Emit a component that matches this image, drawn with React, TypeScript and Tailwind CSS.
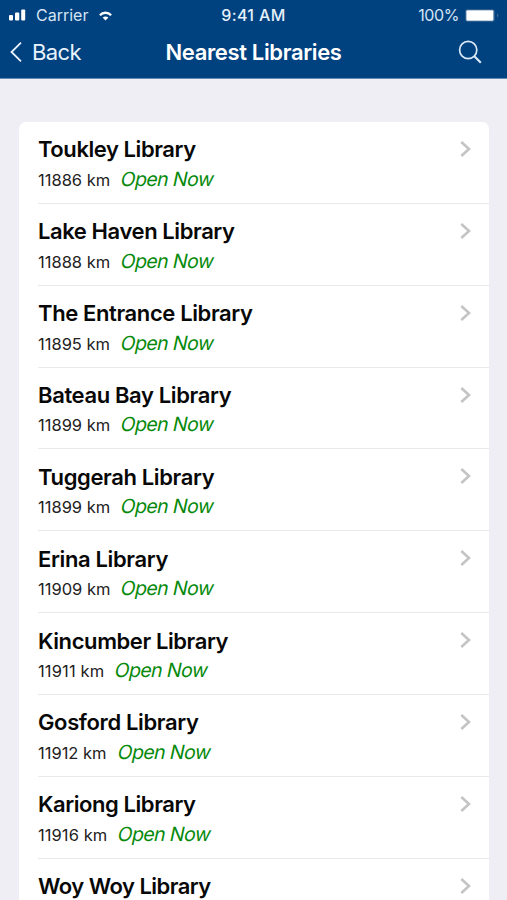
const libraries = [
  { name: "Toukley Library", km: "11886 km", tracking: "tracking-[-0.43px]", kmTracking: "tracking-normal" },
  { name: "Lake Haven Library", km: "11888 km", tracking: "tracking-[-0.41px]", kmTracking: "tracking-normal" },
  { name: "The Entrance Library", km: "11895 km", tracking: "tracking-[-0.38px]", kmTracking: "tracking-normal" },
  { name: "Bateau Bay Library", km: "11899 km", tracking: "tracking-[-0.37px]", kmTracking: "tracking-normal" },
  { name: "Tuggerah Library", km: "11899 km", tracking: "tracking-[-0.37px]", kmTracking: "tracking-normal" },
  { name: "Erina Library", km: "11909 km", tracking: "tracking-[-0.37px]", kmTracking: "tracking-normal" },
  { name: "Kincumber Library", km: "11911 km", tracking: "tracking-[-0.41px]", kmTracking: "tracking-[0.15px]" },
  { name: "Gosford Library", km: "11912 km", tracking: "tracking-[-0.37px]", kmTracking: "tracking-normal" },
  { name: "Kariong Library", km: "11916 km", tracking: "tracking-[-0.43px]", kmTracking: "tracking-[0.07px]" },
  { name: "Woy Woy Library", km: "", tracking: "tracking-[-0.53px]", kmTracking: "tracking-normal" },
];

function StatusBar() {
  return (
    <div className="grid h-[30px] grid-cols-3 items-center text-[16px] leading-[30px]">
      <div className="flex h-full items-center pl-[9px] text-[#d5e5f5]">
        <svg width="17" height="12" viewBox="0 0 17 12" fill="#fff">
          <rect x="0" y="6" width="4" height="5.5" rx="1" />
          <rect x="6" y="3.5" width="4.3" height="8" rx="1" />
          <rect x="12.2" y="0.5" width="4" height="11" rx="1" />
        </svg>
        <span className="ml-[10px]">Carrier</span>
        <svg className="ml-[11px] mt-[2px]" width="13" height="10" viewBox="0 0 13 10" fill="none" stroke="#fff" strokeWidth="2.4">
          <path d="M0.9 4.2C4 0.9 9 0.9 12.1 4.2" />
          <path d="M3.6 6.6C5.4 5.2 7.6 5.2 9.4 6.6L6.5 9.4Z" fill="#fff" stroke="none" />
        </svg>
      </div>
      <div className="text-center font-medium tracking-[0.4px] text-[#e5f0fa]">9:41 AM</div>
      <div className="flex h-full items-center justify-end pr-[7px] text-[#d5e5f5]">
        <span className="tracking-[-0.4px]">100%</span>
        <svg className="ml-[6px]" width="35" height="13" viewBox="0 0 35 13">
          <rect x="0.5" y="0.5" width="29" height="12" rx="1.5" fill="none" stroke="#2b5c8d" />
          <rect x="1.3" y="1.3" width="27.2" height="10.4" rx="1" fill="#fff" />
          <path d="M32 4.5Q35 6.5 32 8.5Z" fill="#41688f" />
        </svg>
      </div>
    </div>
  );
}

function NavBar() {
  return (
    <div className="grid h-[48px] grid-cols-[140px_1fr_140px] items-start">
      <div className="flex items-center pl-[10px] pt-[6px] text-[22px] leading-[32px] text-[#e8f3fd]">
        <svg width="12" height="20" viewBox="0 0 12 20" fill="none" stroke="#e8f3fd" strokeWidth="1.8">
          <path d="M11 0.7L1.5 10L11 19.3" />
        </svg>
        <span className="ml-[10px] tracking-[-0.6px]">Back</span>
      </div>
      <h1 className="whitespace-nowrap pt-[6px] text-center text-[22px] font-semibold leading-[32px] tracking-[-0.35px] text-white">
        Nearest Libraries
      </h1>
      <div className="flex justify-end pr-[25px] pt-[10px]">
        <svg width="24" height="24" viewBox="0 0 24 24" fill="none" stroke="#d9e9f8" strokeWidth="1.7">
          <circle cx="10.2" cy="10" r="8.6" />
          <path d="M16.3 16.2L22.8 22.7" strokeWidth="2.1" />
        </svg>
      </div>
    </div>
  );
}

export default function App() {
  return (
    <div className="flex h-[900px] w-[507px] flex-col overflow-hidden bg-[#efeef4] font-['Inter','Liberation_Sans',sans-serif]">
      <header className="h-[79px] shrink-0 border-b border-[#648bb1] bg-[#00417f]">
        <StatusBar />
        <NavBar />
      </header>
      <main className="ml-[19px] mt-[43px] w-[470px] shrink-0 rounded-t-[7px] bg-white pl-[19px]">
        {libraries.map((lib) => (
          <div key={lib.name} className="flex h-[81.87px] justify-between border-b-[1.5px] border-[#e9e9ec] pt-[11.4px]">
            <div>
              <h2 className={`whitespace-nowrap text-[22px] font-semibold leading-[32px] text-[#080808] ${lib.tracking}`}>
                {lib.name}
              </h2>
              {lib.km && (
                <div className="flex items-baseline whitespace-nowrap pt-[0.4px] leading-[27px]">
                  <span className={`text-[16.5px] text-[#222] ${lib.kmTracking}`}>{lib.km}</span>
                  <span className="ml-[11px] inline-block -skew-x-12 text-[19.5px] tracking-[-0.6px] text-[#078a0c]">Open Now</span>
                </div>
              )}
            </div>
            <svg className="mr-[18px] mt-[7.6px]" width="11" height="16" viewBox="0 0 11 16" fill="none" stroke="#c4c4c6" strokeWidth="2.6">
              <path d="M1.3 1L9 8L1.3 15" />
            </svg>
          </div>
        ))}
      </main>
    </div>
  );
}
